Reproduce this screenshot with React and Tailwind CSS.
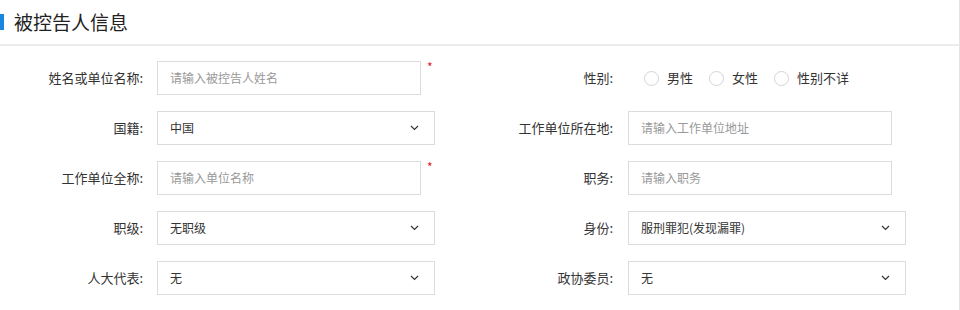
import React from 'react';

const font = { fontFamily: '"Noto Sans CJK SC", "Noto Sans", sans-serif' };

const Chevron = () => (
  <svg width="9" height="6" viewBox="0 0 9 6" className="shrink-0">
    <polyline points="1,1 4.5,4.5 8,1" fill="none" stroke="#333" strokeWidth="1.2" />
  </svg>
);

const Label = ({ children, width }) => (
  <div className={`${width} shrink-0 text-right text-[13px] text-[#333]`}>{children}</div>
);

const TextInput = ({ placeholder, required }) => (
  <div className="relative flex items-start">
    <div className="w-[264px] h-[34px] border border-[#dcdcdc] flex items-center px-[12px] text-[12px] text-[#999]">
      {placeholder}
    </div>
    {required && <span className="ml-[6px] text-[#e02020] text-[12px] leading-none">*</span>}
  </div>
);

const Select = ({ value }) => (
  <div className="w-[278px] h-[34px] border border-[#dcdcdc] flex items-center justify-between pl-[12px] pr-[15px] text-[12px] text-[#333]">
    <span>{value}</span>
    <Chevron />
  </div>
);

const Radio = ({ label }) => (
  <div className="flex items-center mr-[16px]">
    <span className="w-[15px] h-[15px] rounded-full border border-[#d4d4d4] bg-white" />
    <span className="ml-[8px] text-[13px] text-[#333]">{label}</span>
  </div>
);

const Field = ({ label, right, children }) => (
  <div className="flex items-center h-[34px]">
    <Label width={right ? 'w-[142px]' : 'w-[143px]'}>{label}</Label>
    <div className={right ? 'ml-[15px]' : 'ml-[14px]'}>{children}</div>
  </div>
);

export default function App() {
  return (
    <div className="w-[960px] h-[310px] bg-white border-r border-[#e4e4e4] overflow-hidden" style={font}>
      <div className="h-[46px] border-b-2 border-[#ececec] flex items-center">
        <div className="w-[4px] h-[16px] bg-[#1a86e0]" />
        <div className="ml-[10px] text-[19px] text-[#222] leading-none -mt-[2px]">被控告人信息</div>
      </div>
      <div className="pt-[15px] grid grid-cols-[471px_1fr] gap-y-[16px]">
        <Field label="姓名或单位名称:">
          <TextInput placeholder="请输入被控告人姓名" required />
        </Field>
        <Field label="性别:" right>
          <div className="flex items-center ml-[16px]">
            <Radio label="男性" />
            <Radio label="女性" />
            <Radio label="性别不详" />
          </div>
        </Field>

        <Field label="国籍:">
          <Select value="中国" />
        </Field>
        <Field label="工作单位所在地:" right>
          <TextInput placeholder="请输入工作单位地址" />
        </Field>

        <Field label="工作单位全称:">
          <TextInput placeholder="请输入单位名称" required />
        </Field>
        <Field label="职务:" right>
          <TextInput placeholder="请输入职务" />
        </Field>

        <Field label="职级:">
          <Select value="无职级" />
        </Field>
        <Field label="身份:" right>
          <Select value="服刑罪犯(发现漏罪)" />
        </Field>

        <Field label="人大代表:">
          <Select value="无" />
        </Field>
        <Field label="政协委员:" right>
          <Select value="无" />
        </Field>
      </div>
    </div>
  );
}
